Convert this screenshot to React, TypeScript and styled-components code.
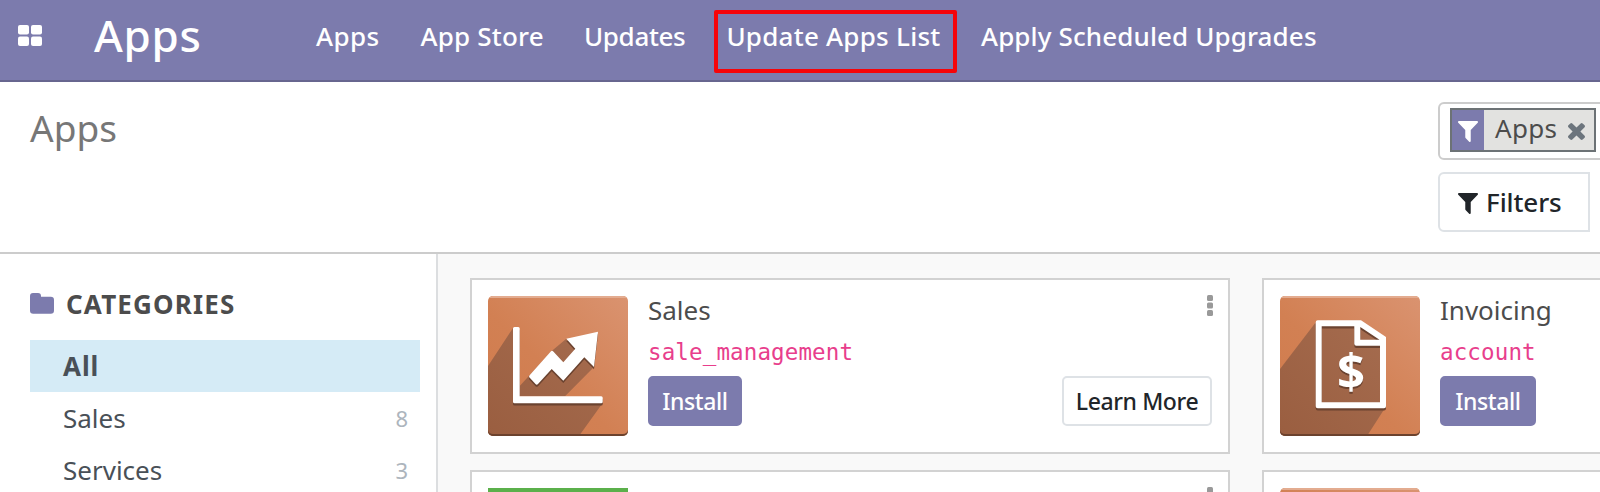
import React from 'react';
import styled, { createGlobalStyle, css } from 'styled-components';

const purple = '#7c7bad';

const GlobalStyle = createGlobalStyle`
  * { box-sizing: border-box; }
  html, body { margin: 0; overflow: hidden; }
  body {
    background: #fff;
    color: #4c4c4c;
    font: 450 26px/36px 'Noto Sans', 'Open Sans', sans-serif;
  }
  svg { display: block; flex: none; }
`;

const Page = styled.div`
  display: flex;
  flex-direction: column;
  width: 100%;
  height: 492px;
  overflow: hidden;
`;

const Navbar = styled.nav`
  display: flex;
  align-items: flex-start;
  flex: none;
  height: 82px;
  padding-left: 18px;
  background: ${purple};
  border-bottom: 2px solid #67668f;
  color: #fff;
`;

const MenuToggle = styled.div`
  width: 76px;
  padding-top: 25px;
`;

const Brand = styled.div`
  width: 222px;
  padding-top: 5px;
  font-size: 44px;
  line-height: 60px;
  font-weight: 500;
  letter-spacing: 0.7px;
`;

const NavLinks = styled.div`
  display: flex;
  gap: 40px;
  padding-top: 18px;
`;

const NavLink = styled.a<{ $width: number; $tracking: number }>`
  position: relative;
  width: ${(p) => p.$width}px;
  font-weight: 500;
  letter-spacing: ${(p) => p.$tracking}px;
  white-space: nowrap;
`;

const Highlight = styled.span`
  position: absolute;
  top: -8px;
  right: -16px;
  bottom: -19px;
  left: -12px;
  border: 4px solid #f60409;
  border-radius: 2px;
`;

const ControlPanel = styled.header`
  display: flex;
  justify-content: space-between;
  flex: none;
  height: 172px;
  padding: 20px 0 0 30px;
  border-bottom: 2px solid #ccc;
`;

const Title = styled.h1`
  margin: 1px 0 0;
  font-size: 37px;
  line-height: 50px;
  font-weight: 450;
  color: #777;
`;

const SearchColumn = styled.div`
  display: flex;
  flex-direction: column;
  align-items: flex-start;
  gap: 12px;
  width: 162px;
`;

const SearchBox = styled.div`
  width: 200px;
  height: 58px;
  padding: 4px 10px;
  border: 2px solid #ccc;
  border-radius: 6px;
`;

const Facet = styled.div`
  display: flex;
  width: 146px;
  height: 44px;
  background: #e2e2e0;
  border: 2px solid #6c7275;
`;

const FacetIcon = styled.div`
  display: flex;
  justify-content: center;
  width: 32px;
  padding-top: 11px;
  background: ${purple};
  color: #fff;
`;

const FacetLabel = styled.div`
  width: 84px;
  padding-left: 11px;
  letter-spacing: 0.3px;
`;

const FacetClose = styled.div`
  padding-top: 13px;
  color: #6c757d;
`;

const FilterButton = styled.button`
  display: flex;
  gap: 8px;
  width: 152px;
  height: 60px;
  padding: 10px 18px;
  background: #fff;
  border: 2px solid #dee2e6;
  border-radius: 6px 0 0 6px;
  color: #212529;
  font: inherit;
  font-weight: 500;
  letter-spacing: -0.1px;

  svg { margin-top: 9px; }
`;

const Content = styled.div`
  display: flex;
  flex: 1;
  min-height: 0;
`;

const Sidebar = styled.aside`
  flex: none;
  width: 438px;
  padding: 32px 16px 0 30px;
  border-right: 2px solid #dcdee0;
`;

const SidebarHeading = styled.div`
  display: flex;
  gap: 12px;
  height: 54px;
  color: ${purple};

  svg { margin-top: 7px; }
`;

const HeadingLabel = styled.span`
  color: #4c4c4c;
  font-weight: 700;
  letter-spacing: 1.15px;
`;

const Category = styled.div<{ $active?: boolean }>`
  display: flex;
  justify-content: space-between;
  width: 390px;
  height: 52px;
  padding: 8px 12px 8px 33px;
  color: #495057;
  ${(p) =>
    p.$active &&
    css`
      background: #d5ebf6;
      font-weight: 700;
      letter-spacing: 0.9px;
    `}
`;

const Count = styled.span`
  color: #adb5bd;
  font-size: 22px;
`;

const Kanban = styled.main`
  display: grid;
  grid-template-columns: 760px 760px;
  grid-auto-rows: 176px;
  gap: 16px 32px;
  flex: 1;
  min-width: 0;
  padding: 24px 0 0 32px;
  background: #f9f9f9;
  overflow: hidden;
`;

const Card = styled.article`
  display: flex;
  gap: 20px;
  padding: 16px;
  background: #fff;
  border: 2px solid #d2d2d2;
`;

const CardBody = styled.div`
  display: flex;
  flex: 1;
  flex-direction: column;
  gap: 8px;
  margin-top: -4px;
`;

const CardTop = styled.div`
  display: flex;
  justify-content: space-between;
  height: 36px;
  color: #4c4c4c;

  svg { margin: 3px -1px 0 0; }
`;

const ModuleName = styled.code`
  height: 32px;
  font: 22.5px/32px 'DejaVu Sans Mono', monospace;
  letter-spacing: 0.13px;
  color: #e83e8c;
`;

const CardActions = styled.div`
  display: flex;
  justify-content: space-between;
`;

const Button = styled.button<{ $width: number; $primary?: boolean }>`
  width: ${(p) => p.$width}px;
  height: 50px;
  padding: 0;
  background: ${(p) => (p.$primary ? purple : '#fff')};
  border: 2px solid ${(p) => (p.$primary ? purple : '#dee2e6')};
  border-radius: 5px;
  color: ${(p) => (p.$primary ? '#fff' : '#212529')};
  font: 500 23px/32px 'Noto Sans', sans-serif;
  letter-spacing: -0.4px;
  white-space: nowrap;
`;

const Funnel = () => (
  <svg width="20" height="21" viewBox="0 0 1408 1408" preserveAspectRatio="none" fill="currentColor">
    <path d="M1403 39q17 41-14 70l-493 493v742q0 42-39 59-13 5-25 5-27 0-45-19l-256-256q-19-19-19-45V602L19 109q-31-29-14-70Q22 0 64 0h1280q42 0 59 39z" />
  </svg>
);

const Cross = () => (
  <svg width="17" height="17" viewBox="110 62 1188 1188" fill="currentColor">
    <path d="M1298 1018q0 40-28 68l-136 136q-28 28-68 28t-68-28l-294-294-294 294q-28 28-68 28t-68-28L138 1086q-28-28-28-68t28-68l294-294-294-294q-28-28-28-68t28-68L274 90q28-28 68-28t68 28l294 294L998 90q28-28 68-28t68 28l136 136q28 28 28 68t-28 68L976 656l294 294q28 28 28 68z" />
  </svg>
);

const Tiles = () => (
  <svg width="24" height="21" fill="currentColor">
    <rect width="11" height="9.5" rx="2" />
    <rect x="13" width="11" height="9.5" rx="2" />
    <rect y="11.5" width="11" height="9.5" rx="2" />
    <rect x="13" y="11.5" width="11" height="9.5" rx="2" />
  </svg>
);

const Folder = () => (
  <svg width="24" height="21" fill="currentColor">
    <path d="M0 3a3 3 0 0 1 3-3h5a3 3 0 0 1 3 3v.8h9.800a3.200 3.200 0 0 1 3.200 3.200v10.500a3.200 3.200 0 0 1-3.200 3.200H3.200A3.200 3.200 0 0 1 0 17.500z" />
  </svg>
);

const Kebab = () => (
  <svg width="6" height="21" fill="#999">
    <rect width="6" height="6" rx="1.500" />
    <rect y="7.500" width="6" height="6" rx="1.500" />
    <rect y="15" width="6" height="6" rx="1.500" />
  </svg>
);

type Kind = 'chart' | 'invoice' | 'orange' | 'green';

const axis = 'M25 32.500q0-1.500 1.500-1.500h3.700q1.500 0 1.500 1.500v67.800h81.500q1.500 0 1.500 1.500v4q0 1.500-1.500 1.500H26.500q-1.500 0-1.500-1.500z';
const arrow = 'M41.600 79.300L62.800 55.500q1.200-1.300 2.500 0L75.300 66.300 87.300 52.700 78.300 42.700 110 35.700 106 71 96.300 61.300 75.300 84.700 63.700 73 50 88q-1.300 1.300-2.500 0L41.500 81.500q-1-1 .1-2.200z';
const sheet = 'M37.700 24.300H81L106 41V110.300a2 2 0 0 1-2 2H37.700a2 2 0 0 1-2-2V26.300a2 2 0 0 1 2-2zM41.700 30.300V106.300H100V49.700H76.300a2 2 0 0 1-2-2V30.300zM80.300 31V43.700H99.500z';

function AppIcon({ kind }: { kind: Kind }) {
  const green = kind === 'green';
  const radius = green ? 0 : 5;
  return (
    <svg width="140" height="140" viewBox="0 0 140 140">
      <defs>
        <linearGradient id={`bg-${kind}`} x1="0" y1="1" x2="1" y2="0">
          <stop offset="0" stopColor={green ? '#5bb04b' : '#d07b4c'} />
          <stop offset=".45" stopColor={green ? '#5bb04b' : '#d28053'} />
          <stop offset="1" stopColor={green ? '#5bb04b' : '#da9370'} />
        </linearGradient>
        <linearGradient id={`shade-${kind}`} x1="0" y1="1" x2="1" y2="0">
          <stop offset="0" stopColor="#9a5e40" />
          <stop offset="1" stopColor="#a56c4f" />
        </linearGradient>
        <clipPath id={`clip-${kind}`}>
          <rect width="140" height="140" rx={radius} />
        </clipPath>
      </defs>
      <g clipPath={`url(#clip-${kind})`}>
        <rect width="140" height="140" fill={`url(#bg-${kind})`} />
        {kind === 'chart' && (
          <>
            <path d="M0 70L25 32V107H114.700L91 140H0zM31.700 90L64 54.700 78.300 42.700 106 71 77 100.300H31.700z" fill={`url(#shade-${kind})`} />
            <path d={`${axis}${arrow}`} fill="#6b4330" transform="translate(0 2.200)" />
            <path d={`${axis}${arrow}`} fill="#fff" />
          </>
        )}
        {kind === 'invoice' && (
          <>
            <path d="M0 73L36 26 81 26 105 42V112L87 140H0z" fill={`url(#shade-${kind})`} />
            <path d={sheet} fillRule="evenodd" fill="#6b4330" transform="translate(0 2.200)" />
            <path d={sheet} fillRule="evenodd" fill="#fff" />
            <g fontFamily="Open Sans, Noto Sans, sans-serif" fontWeight="700" fontSize="49" textAnchor="middle">
              <text x="71" y="94.700" fill="#6b4330" aria-hidden="true">$</text>
              <text x="71" y="92.500" fill="#fff">$</text>
            </g>
          </>
        )}
        {!green && (
          <>
            <path d="M0 0H140V2H0z" fill="#e3ac90" />
            <path d="M0 134Q1 138 5 138H135Q139 138 140 134V140H0z" fill="#6b422e" />
          </>
        )}
      </g>
    </svg>
  );
}

const links = [
  { label: 'Apps', width: 64.5, tracking: 0.4 },
  { label: 'App Store', width: 123.5, tracking: 0.2 },
  { label: 'Updates', width: 102.4, tracking: -0.35 },
  { label: 'Update Apps List', width: 214.6, tracking: 0.25, marked: true },
  { label: 'Apply Scheduled Upgrades', width: 336, tracking: 0.12 },
];

const categories = [
  { label: 'All', active: true },
  { label: 'Sales', count: 8 },
  { label: 'Services', count: 3 },
];

const apps: { kind: Kind; title?: string; module?: string; install?: number }[] = [
  { kind: 'chart', title: 'Sales', module: 'sale_management', install: 94 },
  { kind: 'invoice', title: 'Invoicing', module: 'account', install: 96 },
  { kind: 'green' },
  { kind: 'orange', title: 'Website' },
];

export default function App() {
  return (
    <Page>
      <GlobalStyle />
      <Navbar>
        <MenuToggle><Tiles /></MenuToggle>
        <Brand>Apps</Brand>
        <NavLinks>
          {links.map((l) => (
            <NavLink key={l.label} $width={l.width} $tracking={l.tracking}>
              {l.label}
              {l.marked && <Highlight />}
            </NavLink>
          ))}
        </NavLinks>
      </Navbar>
      <ControlPanel>
        <Title>Apps</Title>
        <SearchColumn>
          <SearchBox>
            <Facet>
              <FacetIcon><Funnel /></FacetIcon>
              <FacetLabel>Apps</FacetLabel>
              <FacetClose><Cross /></FacetClose>
            </Facet>
          </SearchBox>
          <FilterButton><Funnel />Filters</FilterButton>
        </SearchColumn>
      </ControlPanel>
      <Content>
        <Sidebar>
          <SidebarHeading>
            <Folder />
            <HeadingLabel>CATEGORIES</HeadingLabel>
          </SidebarHeading>
          {categories.map((c) => (
            <Category key={c.label} $active={c.active}>
              {c.label}
              {c.count && <Count>{c.count}</Count>}
            </Category>
          ))}
        </Sidebar>
        <Kanban>
          {apps.map((a) => (
            <Card key={a.kind}>
              <AppIcon kind={a.kind} />
              <CardBody>
                <CardTop>
                  <span>{a.title}</span>
                  <Kebab />
                </CardTop>
                {a.module && <ModuleName>{a.module}</ModuleName>}
                {a.install && (
                  <CardActions>
                    <Button $primary $width={a.install}>Install</Button>
                    {a.kind === 'chart' && <Button $width={150}>Learn More</Button>}
                  </CardActions>
                )}
              </CardBody>
            </Card>
          ))}
        </Kanban>
      </Content>
    </Page>
  );
}
